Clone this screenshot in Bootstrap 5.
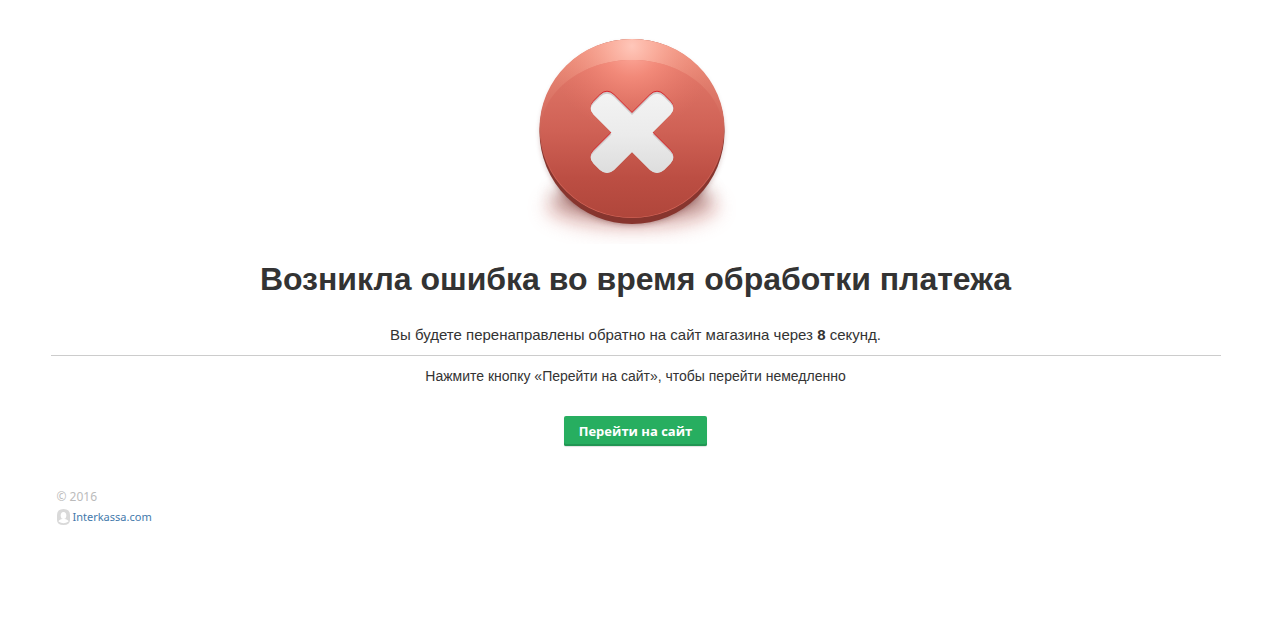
<!DOCTYPE html>
<html lang="ru">
<head>
<meta charset="utf-8">
<meta name="viewport" content="width=device-width, initial-scale=1">
<title>Ошибка оплаты</title>
<link href="https://cdn.jsdelivr.net/npm/bootstrap@5.3.0/dist/css/bootstrap.min.css" rel="stylesheet">
<style>
  body { font-family: "Liberation Sans", Arial, sans-serif; font-size: 14px; line-height: 20px; color: #333; background: #fff; }
  .page-wrap { max-width: 1170px; }
  .status-title { font-size: 32px; line-height: 38px; color: #333; }
  .redirect-note { font-size: 15px; margin: 27px 0 0; }
  .divider { border-color: #ccc; opacity: 1; margin: 10px 0; }
  .btn-go { --bs-btn-color: #fff; --bs-btn-bg: #27ae60; --bs-btn-hover-color: #fff; --bs-btn-hover-bg: #229a55;
    font: bold 13px/20px "Open Sans", "Noto Sans", sans-serif; margin-top: 30px; padding: 5px 15px; border: 0; border-radius: 2px;
    box-shadow: inset 0 -2px #219653, 0 1px 1px rgba(0,0,0,.12); }
  .site-footer { font: 12px/20px "Noto Sans", "Open Sans", sans-serif; color: #bbb; padding: 17px 0 0 6px; }
  .site-footer a { color: #4479ab; font-size: 11px; gap: 3px; }
</style>
</head>
<body>
<main class="page-wrap container-fluid px-0 text-center">
  <svg class="d-block mx-auto mt-4" width="240" height="220" viewBox="0 -2 240 220" role="img" aria-label="Ошибка">
    <defs>
      <linearGradient id="face" x1="0" y1="0" x2="0" y2="1">
        <stop offset="0" stop-color="#e2796a"/><stop offset=".45" stop-color="#cf6155"/><stop offset=".75" stop-color="#bc4e43"/><stop offset="1" stop-color="#b0463b"/>
      </linearGradient>
      <linearGradient id="rim" x1="0" y1="0" x2="0" y2="1">
        <stop offset="0" stop-color="#f29882"/><stop offset=".35" stop-color="#da7264"/><stop offset=".6" stop-color="#c3594e"/><stop offset="1" stop-color="#d9695c"/>
      </linearGradient>
      <radialGradient id="glow" gradientUnits="userSpaceOnUse" cx="116" cy="20" r="84">
        <stop offset="0" stop-color="#ffc7ba"/><stop offset=".3" stop-color="#fdb4a4" stop-opacity=".75"/><stop offset="1" stop-color="#f08474" stop-opacity="0"/>
      </radialGradient>
      <radialGradient id="faceGlow" gradientUnits="userSpaceOnUse" cx="116" cy="22" r="84">
        <stop offset="0" stop-color="#ffb0a2"/><stop offset=".35" stop-color="#f8907f" stop-opacity=".75"/><stop offset="1" stop-color="#e87566" stop-opacity="0"/>
      </radialGradient>
      <linearGradient id="white" gradientUnits="userSpaceOnUse" x1="0" y1="66" x2="0" y2="148">
        <stop offset="0" stop-color="#f3f3f3"/><stop offset=".5" stop-color="#ebebeb"/><stop offset="1" stop-color="#dcdcdc"/>
      </linearGradient>
      <filter id="soft" x="-30%" y="-60%" width="160%" height="220%"><feGaussianBlur stdDeviation="9"/></filter>
      <filter id="contact" x="-30%" y="-60%" width="160%" height="220%"><feGaussianBlur stdDeviation="3"/></filter>
      <path id="cross" d="M116 87 L134 69 Q141 62.500 148 69 L154.500 75.500 Q160.500 82 154.500 88.500 L136.500 106.500 L154.500 124.500 Q160.500 131 154.500 137.500 L148 144 Q141 150 134 144 L116 126 L98 144 Q91 150 84 144 L77.500 137.500 Q71.500 131 77.500 124.500 L95.500 106.500 L77.500 88.500 Q71.500 82 77.500 75.500 L84 69 Q91 62.500 98 69 Z"/>
      <clipPath id="crossClip"><use href="#cross"/></clipPath>
      <path id="plate" d="M25 104 C25 66 66 34 116 34 C166 34 207 66 207 104 A91 87.500 0 0 1 25 104Z"/>
    </defs>
    <ellipse cx="116" cy="182" rx="88" ry="24" fill="#d98c85" opacity=".36" filter="url(#soft)"/>
    <ellipse cx="116" cy="172" rx="78" ry="20" fill="#6a2b28" opacity=".5" filter="url(#soft)"/>
    <circle cx="116" cy="108" r="90" fill="#632320" opacity=".5" filter="url(#contact)"/>
    <circle cx="116" cy="105.500" r="92.500" fill="#87352e"/>
    <ellipse cx="116" cy="102.500" rx="92.500" ry="89.500" fill="url(#rim)"/>
    <ellipse cx="116" cy="102.500" rx="92.500" ry="89.500" fill="url(#glow)"/>
    <use href="#plate" fill="url(#face)"/>
    <use href="#plate" fill="url(#faceGlow)"/>
    <use href="#cross" y="-1" fill="#d6232a"/>
    <use href="#cross" fill="#cfcaca"/>
    <g clip-path="url(#crossClip)"><use href="#cross" y="2" fill="url(#white)"/></g>
  </svg>
  <h1 class="status-title fw-bold mt-3 mb-0">Возникла ошибка во время обработки платежа</h1>
  <p class="redirect-note">Вы будете перенаправлены обратно на сайт магазина через <strong>8</strong> секунд.</p>
  <hr class="divider">
  <p class="mb-0">Нажмите кнопку «Перейти на сайт», чтобы перейти немедленно</p>
  <button type="button" class="btn btn-go">Перейти на сайт</button>
</main>
<footer class="page-wrap container-fluid px-0 mt-4">
  <div class="site-footer">
    <div>© 2016</div>
    <a class="d-inline-flex align-items-center text-decoration-none" href="#">
      <svg width="13" height="17" viewBox="0 0 13 17" aria-hidden="true">
        <path d="M0 6 Q0 0 6.500 0 Q13 0 13 6 V11 Q13 16 6.500 16 Q0 16 0 11Z" fill="#d9d9d9"/>
        <ellipse cx="6.500" cy="6.500" rx="2.800" ry="3.500" fill="#fff"/>
        <path d="M1.500 12.500 Q2 10.500 5.500 10 H7.500 Q11 10.500 11.500 12.500 Q6.500 16 1.500 12.500Z" fill="#fff"/>
      </svg>Interkassa.com</a>
  </div>
</footer>
<script src="https://cdn.jsdelivr.net/npm/bootstrap@5.3.0/dist/js/bootstrap.bundle.min.js"></script>
</body>
</html>
